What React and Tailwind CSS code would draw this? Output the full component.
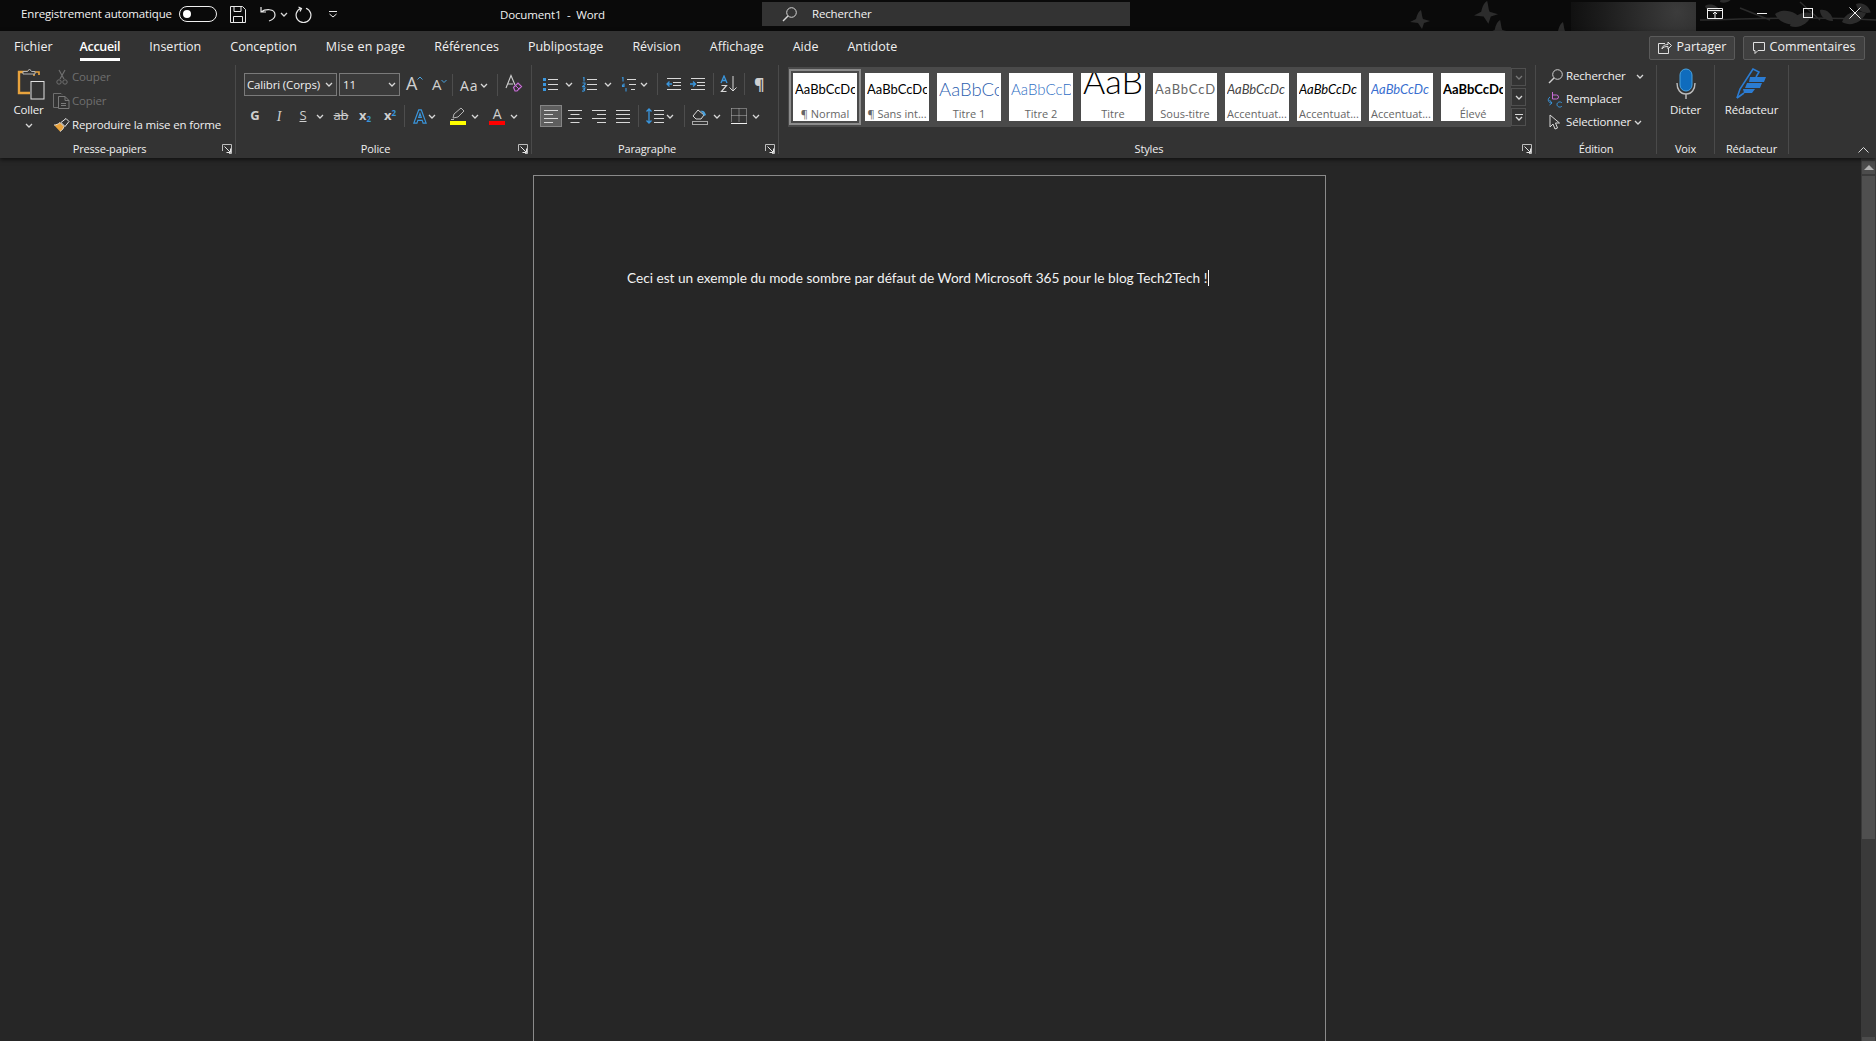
const Chev = ({ className = "ml-0", dim }) => (
  <svg width="8" height="5" viewBox="0 0 8 5" className={className + " shrink-0"}>
    <path d="M1 1l3 3 3-3" fill="none" stroke={dim ? "#777" : "#d8d8d8"} strokeWidth="1.3" />
  </svg>
);

const Sep = ({ className }) => <div className={"h-[22px] w-px shrink-0 bg-[#4d4d4d] " + className} />;

const Launcher = () => (
  <svg width="10" height="10" viewBox="0 0 10 10" className="absolute right-[3px] bottom-[0px]">
    <path d="M.5 7V.5H9.5V9.5H7" fill="none" stroke="#bdbdbd" />
    <path d="M2.5 2.5l5.5 5.5M8.5 4.5v4h-4" fill="none" stroke="#e6e6e6" />
  </svg>
);

const Lines = ({ kind }) => {
  const rows = {
    left: ["M0 1.5h14", "M0 5.5h9", "M0 9.5h14", "M0 13.5h9"],
    center: ["M0 1.5h14", "M2.5 5.5h9", "M0 9.5h14", "M2.5 13.5h9"],
    right: ["M0 1.5h14", "M5 5.5h9", "M0 9.5h14", "M5 13.5h9"],
    justify: ["M0 1.5h14", "M0 5.5h14", "M0 9.5h14", "M0 13.5h14"],
  };
  return (
    <svg width="14" height="15" viewBox="0 0 14 15">
      <path d={rows[kind].join("")} stroke="#d8d8d8" fill="none" />
    </svg>
  );
};

function Coller() {
  return (
    <svg width="28" height="32" viewBox="0 0 28 32" className="ml-[4px]">
      <path d="M12 4H2v21h11" fill="none" stroke="#e8a33d" strokeWidth="2.4" />
      <path d="M17 8V4h5v3" fill="none" stroke="#e8a33d" strokeWidth="1.6" />
      <path d="M6 6V3.5h4.5L12.5 1l2 2.5H18V6z" fill="#333" stroke="#b5b5b5" />
      <rect x="14" y="13.5" width="13" height="17.5" fill="#333" stroke="#e2e2e2" />
    </svg>
  );
}

function Scissors() {
  return (
    <svg width="12" height="16" viewBox="0 0 12 16" className="ml-[3px]">
      <path d="M3 1l5 9M9 1L4 10" stroke="#6f6f6f" fill="none" strokeWidth="1.2" />
      <circle cx="3" cy="13" r="2.2" fill="none" stroke="#6f6f6f" />
      <circle cx="9" cy="13" r="2.2" fill="none" stroke="#6f6f6f" />
    </svg>
  );
}

function CopyIcon() {
  return (
    <svg width="17" height="16" viewBox="0 0 17 16">
      <path d="M5 14.5H.5V.5H8l1 1" fill="none" stroke="#6f6f6f" />
      <path d="M5.5 15.5V3.5H12l4 4v8zM12 3.5v4h4M8 10.5h5M8 12.5h5" fill="none" stroke="#7a7a7a" />
    </svg>
  );
}

function Painter() {
  return (
    <svg width="17" height="15" viewBox="0 0 17 15">
      <path d="M1 7l6 6.5c2-1 3.5-3 4-5L7 4.5C5.5 6 3 7 1 7z" fill="#e8a33d" />
      <path d="M1 7c2 0 4.500-1 6-2.500l4 4c-.5 2-2 4-4 5" fill="none" stroke="#f3f3f3" strokeWidth=".8" />
      <path d="M8 4.500l5-4 3 3-4 5z" fill="#333" stroke="#e6e6e6" />
    </svg>
  );
}

function AScale({ small, up }) {
  return (
    <div className="flex items-start">
      <span className={small ? "text-[15px] leading-none text-[#cfcfcf]" : "text-[18px] leading-none text-[#cfcfcf]"}>A</span>
      <svg width="6" height="4" viewBox="0 0 6 4" className="mt-[2px]">
        <path d={up ? "M.5 3.500L3 1l2.500 2.500" : "M.5 1L3 3.500 5.500 1"} stroke="#4aa3e0" fill="none" />
      </svg>
    </div>
  );
}

function ClearFormat() {
  return (
    <svg width="18" height="18" viewBox="0 0 18 18">
      <path d="M1 14L6 1.500 10 11M3 10h5" fill="none" stroke="#cfcfcf" strokeWidth="1.100" />
      <path d="M8.500 13.500L13 9l3.500 3.500-4.500 4.500h-2z" fill="none" stroke="#c86dd7" strokeWidth="1.200" />
      <path d="M10.500 11.500l3.500 3.500" stroke="#c86dd7" />
    </svg>
  );
}

function Bullets({ type }) {
  return (
    <svg width="16" height="15" viewBox="0 0 16 15">
      <path d={type === "multi" ? "M6 2.500h9M8 7.500h7M10 12.500h4" : "M5 2.500h10M5 7.500h10M5 12.500h10"} stroke="#d8d8d8" fill="none" />
      {type === "bullet" && (
        <g fill="#3a96dd">
          <rect x="0" y="1" width="3" height="3" />
          <rect x="0" y="6" width="3" height="3" />
          <rect x="0" y="11" width="3" height="3" />
        </g>
      )}
      {type === "number" && (
        <path d="M1 1l1-.500v4M.5 6h2.500v1.500L.5 9.500h2.500M.5 11h2.500l-1 1.500c1 0 1 2-2 1.500" fill="none" stroke="#3a96dd" strokeWidth="1.100" />
      )}
      {type === "multi" && (
        <path d="M1 1l1-.500v4M3 6.500v3H1.500v-1.500H3M5 11v3.500" fill="none" stroke="#3a96dd" strokeWidth="1.100" />
      )}
    </svg>
  );
}

function Indent({ dir }) {
  return (
    <svg width="15" height="14" viewBox="0 0 15 14">
      <path d="M1 1.500h14M7 5.500h8M7 8.500h8M1 12.500h14" stroke="#d8d8d8" fill="none" />
      <path d={dir === "in" ? "M0 7h5M3 4.500L5.500 7 3 9.500" : "M6 7H1M3.500 4.500L1 7l2.500 2.500"} stroke="#3a96dd" fill="none" strokeWidth="1.300" />
    </svg>
  );
}

function SortIcon() {
  return (
    <svg width="18" height="18" viewBox="0 0 18 18">
      <path d="M1 8L4 1l3 7M2 5.500h4" fill="none" stroke="#3a96dd" strokeWidth="1.300" />
      <path d="M1.500 10.500h5l-5 6h5" fill="none" stroke="#d8d8d8" strokeWidth="1.200" />
      <path d="M13 1v15M9.500 12.500L13 16l3.500-3.500" fill="none" stroke="#d8d8d8" />
    </svg>
  );
}

function SpacingIcon() {
  return (
    <svg width="18" height="16" viewBox="0 0 18 16">
      <path d="M3 1v14M.5 3.500L3 1l2.500 2.500M.5 12.500L3 15l2.500-2.500" fill="none" stroke="#3a96dd" strokeWidth="1.300" />
      <path d="M8 2.500h10M8 6.500h10M8 10.500h10M8 14.500h10" stroke="#d8d8d8" />
    </svg>
  );
}

function Bucket() {
  return (
    <svg width="17" height="17" viewBox="0 0 17 17">
      <path d="M1 8l5-6 6 5-3 4H4z" fill="none" stroke="#d8d8d8" />
      <path d="M8 3c3-1 5 0 6 4l-2 1-2-4z" fill="#4aa3e0" />
      <rect x=".5" y="13.500" width="15" height="3" fill="none" stroke="#a8a8a8" />
    </svg>
  );
}

function BorderIcon() {
  return (
    <svg width="16" height="16" viewBox="0 0 16 16">
      <path d="M.5.500h15v14M.5.500v14M8 .5v14M.5 7.500h15" fill="none" stroke="#b8b8b8" strokeDasharray="1 1" />
      <path d="M0 15.500h16" stroke="#f0f0f0" />
    </svg>
  );
}

function Leaf({ x, y, r = 0, s = 1 }) {
  return <path transform={`translate(${x} ${y}) rotate(${r}) scale(${s})`} d="M0 0C4-5 12-5 17 0 12 5 4 5 0 0z" />;
}

function Bird({ x, y, s = 1, flip }) {
  return (
    <path
      transform={`translate(${x} ${y}) scale(${flip ? -s : s} ${s})`}
      d="M0 12L6 9C7 4 9 1 11 0 12 4 12 7 13 9L20 11 14 13 12 19 8 13z"
    />
  );
}

function TitleBar() {
  return (
    <div className="relative flex h-[31px] shrink-0 items-center bg-[#0a0a0a] text-[11.500px] text-[#f2f2f2]">
      <svg width="496" height="31" viewBox="0 0 496 31" className="absolute top-0 right-0" fill="#2c2c2c">
        <Bird x={30} y={10} />
        <Bird x={94} y={1} s={1.200} />
        <Bird x={108} y={20} s={1.100} />
        <Bird x={172} y={22} />
        <path d="M320 20c40 0 100-5 176 0M360 8l30 12M420 2l20 18" fill="none" stroke="#2c2c2c" strokeWidth="1.500" />
        <Leaf x={325} y={6} r={20} />
        <Leaf x={340} y={2} r={-30} />
        <Leaf x={395} y={14} r={15} s={1.700} />
        <Leaf x={410} y={26} r={-30} s={1.500} />
        <Leaf x={440} y={10} r={40} />
        <Leaf x={462} y={22} r={-20} s={1.500} />
        <Leaf x={476} y={4} r={30} />
      </svg>
      <div className="relative mb-[3px] flex w-[500px] shrink-0 items-center pl-[21px]">
        <span className="w-[151px]">Enregistrement automatique</span>
        <div className="ml-[7px] flex h-[16px] w-[38px] items-center rounded-full border border-[#f0f0f0] pl-[3px]">
          <div className="h-[8px] w-[8px] rounded-full bg-white" />
        </div>
        <svg width="16" height="17" viewBox="0 0 16 17" className="ml-[13px]" fill="none" stroke="#e8e8e8">
          <path d="M.5.500h12l3 3v13H.5zM4 .5v5h7v-5M3.500 16.500v-6h9v6" />
        </svg>
        <svg width="16" height="16" viewBox="0 0 16 16" className="ml-[14px]" fill="none" stroke="#e8e8e8" strokeWidth="1.200">
          <path d="M1 1v5h5M1 6c4-3 14-4 14 3 0 3-3 5-6 6" />
        </svg>
        <Chev className="ml-[4px]" />
        <svg width="17" height="17" viewBox="0 0 17 17" className="ml-[7px]" fill="none" stroke="#e8e8e8" strokeWidth="1.200">
          <path d="M6 2.200A7.400 7.400 0 1 0 11 2.200M3.500 1l3 1.500L5 5.500" />
        </svg>
        <svg width="8" height="7" viewBox="0 0 8 7" className="ml-[17px]" fill="none" stroke="#e8e8e8">
          <path d="M0 .5h8M.5 3l3.500 3 3.500-3" />
        </svg>
      </div>
      <span className="mb-[2px] w-[262px] shrink-0">Document1&nbsp; - &nbsp;Word</span>
      <div className="mt-[2px] flex h-[24px] w-[368px] shrink-0 items-center self-start bg-[#333333] pl-[20px]">
        <svg width="15" height="15" viewBox="0 0 15 15" fill="none" stroke="#d8d8d8">
          <circle cx="9.500" cy="5.500" r="4.800" />
          <path d="M6 9l-5 5" strokeWidth="1.400" />
        </svg>
        <span className="ml-[15px]">Rechercher</span>
      </div>
      <div className="relative ml-auto flex h-full items-center pr-[15px]">
        <div className="h-[29px] w-[125px] self-end bg-[radial-gradient(circle_at_85%_35%,#3c3c3c,#1c1c1c_70%,#101010)]" />
        <svg width="16" height="11" viewBox="0 0 16 11" className="mb-[5px] ml-[11px]" fill="none" stroke="#f0f0f0">
          <path d="M.5.500h15v10H.5zM.5 2.500h15M8 10V4M6 6l2-2 2 2" />
        </svg>
        <div className="mb-[5px] ml-[34px] h-px w-[10px] bg-[#f0f0f0]" />
        <div className="mb-[5px] ml-[36px] h-[10px] w-[10px] border border-[#f0f0f0]" />
        <svg width="12" height="12" viewBox="0 0 12 12" className="mb-[5px] ml-[36px]" stroke="#f0f0f0">
          <path d="M.5.500l11 11M11.500.5l-11 11" />
        </svg>
      </div>
    </div>
  );
}

function TabsRow() {
  return (
    <div className="flex h-[33px] items-center pl-[14px] text-[12.500px] tracking-normal text-[#f0f0f0]">
      <div className="flex gap-[29px]">
        <div>Fichier</div>
        <div className="relative -ml-[2px] font-semibold tracking-[-0.3px] text-white">
          Accueil
          <div className="absolute inset-x-0 -bottom-[4px] h-[3px] bg-white" />
        </div>
        <div>Insertion</div>
        <div>Conception</div>
        <div className="tracking-[0.2px]">Mise en page</div>
        <div>Références</div>
        <div>Publipostage</div>
        <div>Révision</div>
        <div>Affichage</div>
        <div>Aide</div>
        <div>Antidote</div>
      </div>
      <div className="mr-[11px] ml-auto flex gap-[8px]">
        <button className="flex h-[24px] w-[86px] items-center justify-center gap-[5px] rounded-[2px] border border-[#5a5a5a] bg-[#404040]">
          <svg width="14" height="13" viewBox="0 0 14 13" fill="none" stroke="#e0e0e0">
            <path d="M7 2.500H.5v10h10V8M4 8c0-3 3-4.500 6-4.500V1l3.500 3.500L10 8V5.500C7 5.500 5 6 4 8z" />
          </svg>
          Partager
        </button>
        <button className="flex h-[24px] w-[122px] items-center justify-center gap-[5px] rounded-[2px] border border-[#5a5a5a] bg-[#404040]">
          <svg width="12" height="12" viewBox="0 0 12 12" fill="none" stroke="#e0e0e0">
            <path d="M.5.500h11v8H5l-3 3v-3H.5z" />
          </svg>
          Commentaires
        </button>
      </div>
    </div>
  );
}

function Group({ label, launcher, className, children }) {
  return (
    <div className={"relative flex h-[89px] shrink-0 flex-col border-r border-[#4a4a4a] " + className}>
      <div className="flex-1">{children}</div>
      <div className={launcher ? "h-[17px] pr-[16px] text-center text-[11px] leading-[24px] text-[#f0f0f0]" : "h-[17px] text-center text-[11px] leading-[24px] text-[#f0f0f0]"}>
        {label}
      </div>
      {launcher && <Launcher />}
    </div>
  );
}

function Clipboard() {
  return (
    <Group label="Presse-papiers" launcher className="w-[236px]">
      <div className="flex">
        <div className="flex w-[53px] flex-col items-center pt-[3px] pl-[5px] pr-[1px]">
          <Coller />
          <div className="mt-[1px] text-[11.500px] text-[#f0f0f0]">Coller</div>
          <Chev className="mt-[5px]" />
        </div>
        <div className="text-[11.500px]">
          <div className="flex h-[24px] items-center text-[#6f6f6f]">
            <div className="w-[19px]"><Scissors /></div>Couper
          </div>
          <div className="flex h-[24px] items-center text-[#6f6f6f]">
            <div className="w-[19px]"><CopyIcon /></div>Copier
          </div>
          <div className="flex h-[24px] items-center text-[#f0f0f0]">
            <div className="w-[19px]"><Painter /></div>Reproduire la mise en forme
          </div>
        </div>
      </div>
    </Group>
  );
}

function Police() {
  return (
    <Group label="Police" launcher className="w-[296px]">
      <div className="flex h-[31px] items-end text-[#d8d8d8]">
        <div className="ml-[8px] flex h-[23px] w-[93px] items-center justify-between border border-[#7a7a7a] bg-[#3a3a3a] pr-[3px] pl-[2px] text-[11.500px] text-[#f0f0f0]">
          Calibri (Corps) <Chev />
        </div>
        <div className="ml-[2px] flex h-[23px] w-[61px] items-center justify-between border border-[#7a7a7a] bg-[#3a3a3a] pr-[3px] pl-[3px] text-[11.500px] text-[#f0f0f0]">
          11 <Chev />
        </div>
        <div className="ml-[6px] h-[22px] w-[19px]"><AScale up /></div>
        <div className="ml-[7px] mt-[3px] h-[19px] w-[17px]"><AScale small /></div>
        <Sep className="ml-[3px]" />
        <div className="ml-[7px] flex h-[22px] items-center text-[14px] tracking-[1px]">Aa<Chev className="ml-[1px]" /></div>
        <Sep className="ml-[9px]" />
        <div className="ml-[7px] h-[22px]"><ClearFormat /></div>
      </div>
      <div className="mt-[9px] flex h-[22px] items-center text-[#cfcfcf]">
        <div className="ml-[7px] w-[24px] text-center text-[13px] font-bold">G</div>
        <div className="w-[24px] text-center font-['Liberation_Serif',serif] text-[14px] italic">I</div>
        <div className="w-[24px] text-center text-[13px] underline">S</div>
        <Chev className="ml-[1px]" />
        <div className="ml-[5px] w-[24px] text-center text-[13px] line-through">ab</div>
        <div className="w-[24px] text-center text-[13px] font-bold">x<sub className="text-[8px] text-[#3a96dd]">2</sub></div>
        <div className="ml-[1px] w-[24px] text-center text-[13px] font-bold">x<sup className="text-[8px] text-[#3a96dd]">2</sup></div>
        <Sep className="ml-[2px]" />
        <svg width="14" height="15" viewBox="0 0 16 17" className="ml-[8px] mr-px" fill="none" stroke="#3a96dd" strokeWidth="1.300">
          <path d="M1 16L6.500 1h3L15 16h-3.500l-1-3h-5l-1 3zM6.500 9.500L8 5l1.500 4.500z" />
        </svg>
        <Chev />
        <div className="ml-[14px] flex w-[16px] flex-col">
          <svg width="16" height="13" viewBox="0 0 16 13" fill="none" stroke="#b5b5b5">
            <path d="M3 11l1-4 7-6 3 3-6 6zM1 12.500h3" />
          </svg>
          <div className="mt-[1px] h-[4px] bg-[#ffff00]" />
        </div>
        <Chev className="ml-[5px]" />
        <div className="ml-[10px] flex w-[16px] flex-col">
          <div className="h-[13px] text-center text-[14px] leading-[13px]">A</div>
          <div className="mt-[1px] h-[4px] bg-[#ff0000]" />
        </div>
        <Chev className="ml-[5px]" />
      </div>
    </Group>
  );
}

function Paragraphe() {
  return (
    <Group label="Paragraphe" launcher className="w-[247px]">
      <div className="flex h-[31px] items-end">
        <div className="flex h-[24px] items-center">
          <div className="ml-[11px]"><Bullets type="bullet" /></div>
          <Chev className="ml-[6px]" />
          <div className="ml-[9px]"><Bullets type="number" /></div>
          <Chev className="ml-[6px]" />
          <div className="ml-[9px]"><Bullets type="multi" /></div>
          <Chev className="ml-[3px]" />
          <Sep className="ml-[9px]" />
          <div className="ml-[8px]"><Indent dir="out" /></div>
          <div className="ml-[9px]"><Indent dir="in" /></div>
          <Sep className="ml-[8px]" />
          <div className="ml-[6px]"><SortIcon /></div>
          <Sep className="ml-[6px]" />
          <div className="ml-[9px] text-[16px] font-bold text-[#cfcfcf]">¶</div>
        </div>
      </div>
      <div className="mt-[9px] flex h-[22px] items-center">
        <div className="ml-[8px] flex h-[22px] w-[22px] items-center justify-center border border-[#858585] bg-[#5e5e5e]">
          <Lines kind="left" />
        </div>
        <div className="ml-[6px]"><Lines kind="center" /></div>
        <div className="ml-[10px]"><Lines kind="right" /></div>
        <div className="ml-[10px]"><Lines kind="justify" /></div>
        <Sep className="ml-[8px]" />
        <div className="ml-[7px]"><SpacingIcon /></div>
        <Chev className="ml-[2px]" />
        <Sep className="ml-[10px]" />
        <div className="ml-[7px]"><Bucket /></div>
        <Chev className="ml-[4px]" />
        <div className="ml-[10px]"><BorderIcon /></div>
        <Chev className="ml-[5px]" />
      </div>
    </Group>
  );
}

const styleTiles = [
  { label: "¶ Normal", text: "AaBbCcDc", cls: "text-[13px] text-black", selected: true },
  { label: "¶ Sans int...", text: "AaBbCcDc", cls: "text-[13px] text-black" },
  { label: "Titre 1", text: "AaBbCc", cls: "text-[18.500px] font-light text-[#2f5fb0]" },
  { label: "Titre 2", text: "AaBbCcD", cls: "text-[15px] font-light text-[#2f6fc4]" },
  { label: "Titre", text: "AaB", cls: "inline-block -translate-y-[9px] text-[34px] font-light text-black" },
  { label: "Sous-titre", text: "AaBbCcD", cls: "text-[13px] tracking-[0.8px] text-[#666]" },
  { label: "Accentuat...", text: "AaBbCcDc", cls: "text-[13px] italic text-[#444]" },
  { label: "Accentuat...", text: "AaBbCcDc", cls: "text-[13px] italic text-black" },
  { label: "Accentuat...", text: "AaBbCcDc", cls: "text-[13px] italic text-[#3a6fd0]" },
  { label: "Élevé", text: "AaBbCcDc", cls: "text-[13px] font-bold text-black" },
];

function Styles() {
  return (
    <Group label="Styles" launcher className="w-[757px]">
      <div className="mt-[2px] ml-[9px] flex">
        <div className="flex h-[60px] w-[723px] gap-[8px] bg-[#4a4a4a] pt-[6px] pl-[5px] tracking-normal">
          {styleTiles.map((s, i) => (
            <div
              key={i}
              className={
                s.selected
                  ? "flex h-[48px] w-[64px] flex-col items-center overflow-hidden bg-white outline-2 outline-offset-2 outline-[#8c8c8c]"
                  : "flex h-[48px] w-[64px] flex-col items-center overflow-hidden bg-white"
              }
            >
              <div className="flex h-[33px] w-[60px] items-center overflow-hidden font-['Lato',sans-serif]">
                <span className={s.cls}>{s.text}</span>
              </div>
              <div className="text-[11px] leading-[15px] text-[#666]">{s.label}</div>
            </div>
          ))}
        </div>
        <div className="flex w-[15px] flex-col gap-[2px] pt-[1px]">
          <div className="flex h-[18px] items-center justify-center border border-[#4f4f4f]"><Chev dim /></div>
          <div className="flex h-[18px] items-center justify-center border border-[#4f4f4f]"><Chev /></div>
          <div className="flex h-[18px] flex-col items-center justify-center gap-[1px] border border-[#4f4f4f]">
            <div className="h-px w-[8px] bg-[#d8d8d8]" />
            <Chev />
          </div>
        </div>
      </div>
    </Group>
  );
}

function Edition() {
  return (
    <Group label="Édition" className="w-[121px]">
      <div className="flex flex-col gap-[3px] pt-px text-[11.500px] text-[#f0f0f0]">
        <div className="flex h-[20px] items-center pl-[12px]">
          <svg width="15" height="15" viewBox="0 0 15 15" fill="none" stroke="#d0d0d0" className="mr-[3px]">
            <circle cx="9.500" cy="5.500" r="4.800" />
            <path d="M6 9l-5 5" strokeWidth="1.400" />
          </svg>
          Rechercher
          <Chev className="ml-[10px]" />
        </div>
        <div className="flex h-[20px] items-center pl-[11px]">
          <svg width="16" height="17" viewBox="0 0 16 17" fill="none" className="mr-[3px]">
            <path d="M6 2v7h4a2 2 0 0 0 0-4H6" stroke="#c86dd7" transform="translate(-.5 -1)" />
            <path d="M3 6C0 8 1 12 5 12M2.500 9L5 12l-2.500 2" stroke="#3a96dd" />
            <path d="M15 12c-1.500-2-5-1-5 1.500s3.500 3.500 5 1.500" stroke="#3a96dd" />
          </svg>
          Remplacer
        </div>
        <div className="flex h-[20px] items-center pl-[13px]">
          <svg width="12" height="16" viewBox="0 0 12 16" fill="none" stroke="#d8d8d8" className="mr-[5px]">
            <path d="M1 1v12l3-3 2 5 2.500-1-2-5h4z" />
          </svg>
          Sélectionner
          <Chev className="ml-[3px]" />
        </div>
      </div>
    </Group>
  );
}

function Voix() {
  return (
    <Group label="Voix" className="w-[58px]">
      <div className="flex flex-col items-center pt-[3px]">
        <svg width="20" height="31" viewBox="0 0 20 31" fill="none">
          <rect x="4" y="1" width="12" height="22" rx="6" fill="#0f6cbd" stroke="#4aa3e0" />
          <path d="M1 15c0 6 3 11 9 11s9-5 9-11M10 26v5" stroke="#bdbdbd" strokeWidth="1.400" />
        </svg>
        <div className="mt-[2px] text-[11.500px] text-[#f0f0f0]">Dicter</div>
      </div>
    </Group>
  );
}

function Redacteur() {
  return (
    <Group label="Rédacteur" className="w-[74px]">
      <div className="flex flex-col items-center pt-[3px]">
        <svg width="31" height="31" viewBox="0 0 31 31" fill="none">
          <path d="M1 30l3-9L17 1l6 3-3 5" stroke="#2b7cd3" strokeWidth="1.600" />
          <path d="M14 9h16l-2 5H13zM11 15h15l-2 5H9zM7 21h12l-3 4H8z" fill="#2b7cd3" />
          <path d="M1 30l7-5" stroke="#2b7cd3" strokeWidth="1.600" />
        </svg>
        <div className="mt-[2px] text-[11.500px] text-[#f0f0f0]">Rédacteur</div>
      </div>
    </Group>
  );
}

function Ribbon() {
  return (
    <div className="relative z-10 h-[127px] shrink-0 bg-[#333333] shadow-[0_2px_4px_rgba(0,0,0,0.55)]">
      <TabsRow />
      <div className="flex pt-[1px]">
        <Clipboard />
        <Police />
        <Paragraphe />
        <Styles />
        <Edition />
        <Voix />
        <Redacteur />
      </div>
      <svg width="11" height="6" viewBox="0 0 11 6" className="absolute right-[7px] bottom-[5px]">
        <path d="M.5 5.500l5-5 5 5" fill="none" stroke="#d8d8d8" />
      </svg>
    </div>
  );
}

function Document() {
  return (
    <div className="flex min-h-0 flex-1 bg-[#262626]">
      <div className="flex-1 overflow-hidden pt-[17px] pl-[533px]">
        <div className="h-[900px] w-[793px] border border-[#8a8a8a] pt-[91px] pl-[93px]">
          <p className="font-['Lato',sans-serif] text-[13.670px] leading-[20px] tracking-normal text-[#f2f2f2]">
            Ceci est un exemple du mode sombre par défaut de Word Microsoft 365 pour le blog Tech2Tech !
            <span className="ml-px inline-block h-[16px] w-px translate-y-[3px] bg-white" />
          </p>
        </div>
      </div>
      <div className="flex w-[15px] shrink-0 flex-col bg-[#3a3a3a] px-px pt-[3px]">
        <div className="flex h-[13px] items-center justify-center bg-[#4c4c4c]">
          <div className="h-0 w-0 border-x-[5px] border-b-[5px] border-x-transparent border-b-[#b0b0b0]" />
        </div>
        <div className="mt-[2px] h-[663px] bg-[#4f4f4f]" />
        <div className="mt-auto h-[4px] bg-[#4c4c4c]" />
      </div>
    </div>
  );
}

export default function App() {
  return (
    <div className="flex h-screen w-screen flex-col overflow-hidden whitespace-nowrap bg-[#262626] font-['Open_Sans',sans-serif] tracking-[-0.15px]">
      <TitleBar />
      <Ribbon />
      <Document />
    </div>
  );
}
